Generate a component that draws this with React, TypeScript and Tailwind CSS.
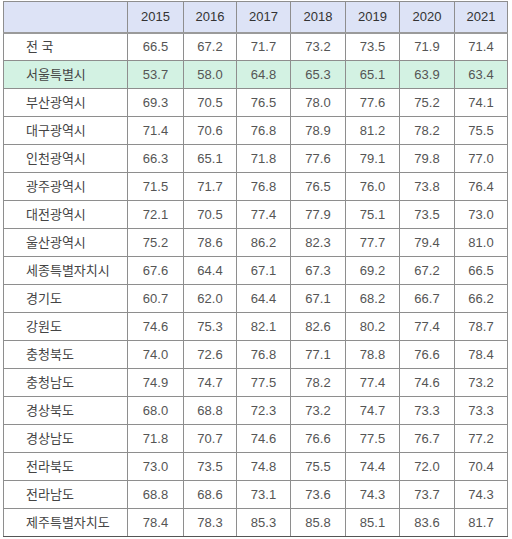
const years = ["2015", "2016", "2017", "2018", "2019", "2020", "2021"];

const rows: { name: string; values: string[]; highlight?: boolean }[] = [
  { name: "전 국", values: ["66.5", "67.2", "71.7", "73.2", "73.5", "71.9", "71.4"] },
  { name: "서울특별시", values: ["53.7", "58.0", "64.8", "65.3", "65.1", "63.9", "63.4"], highlight: true },
  { name: "부산광역시", values: ["69.3", "70.5", "76.5", "78.0", "77.6", "75.2", "74.1"] },
  { name: "대구광역시", values: ["71.4", "70.6", "76.8", "78.9", "81.2", "78.2", "75.5"] },
  { name: "인천광역시", values: ["66.3", "65.1", "71.8", "77.6", "79.1", "79.8", "77.0"] },
  { name: "광주광역시", values: ["71.5", "71.7", "76.8", "76.5", "76.0", "73.8", "76.4"] },
  { name: "대전광역시", values: ["72.1", "70.5", "77.4", "77.9", "75.1", "73.5", "73.0"] },
  { name: "울산광역시", values: ["75.2", "78.6", "86.2", "82.3", "77.7", "79.4", "81.0"] },
  { name: "세종특별자치시", values: ["67.6", "64.4", "67.1", "67.3", "69.2", "67.2", "66.5"] },
  { name: "경기도", values: ["60.7", "62.0", "64.4", "67.1", "68.2", "66.7", "66.2"] },
  { name: "강원도", values: ["74.6", "75.3", "82.1", "82.6", "80.2", "77.4", "78.7"] },
  { name: "충청북도", values: ["74.0", "72.6", "76.8", "77.1", "78.8", "76.6", "78.4"] },
  { name: "충청남도", values: ["74.9", "74.7", "77.5", "78.2", "77.4", "74.6", "73.2"] },
  { name: "경상북도", values: ["68.0", "68.8", "72.3", "73.2", "74.7", "73.3", "73.3"] },
  { name: "경상남도", values: ["71.8", "70.7", "74.6", "76.6", "77.5", "76.7", "77.2"] },
  { name: "전라북도", values: ["73.0", "73.5", "74.8", "75.5", "74.4", "72.0", "70.4"] },
  { name: "전라남도", values: ["68.8", "68.6", "73.1", "73.6", "74.3", "73.7", "74.3"] },
  { name: "제주특별자치도", values: ["78.4", "78.3", "85.3", "85.8", "85.1", "83.6", "81.7"] },
];

const colWidths = [124, 56, 53, 54, 55, 54, 55, 53];

export default function App() {
  return (
    <div
      className="h-[539px] w-[512px] overflow-hidden bg-white pl-[3px] pt-[1px]"
      style={{ fontFamily: '"Liberation Sans", "Noto Sans CJK KR", sans-serif' }}
    >
      <table className="table-fixed border-collapse text-[13px] text-[#555]">
        <colgroup>
          {colWidths.map((w, i) => (
            <col key={i} style={{ width: w }} />
          ))}
        </colgroup>
        <thead>
          <tr className="h-[31px] bg-[#dde3f6]">
            <th className="border border-b-2 border-[#8e8e8e] border-b-[#9a9a9a]" />
            {years.map((y) => (
              <th
                key={y}
                className="border border-b-2 border-[#8e8e8e] border-b-[#9a9a9a] text-center font-normal text-[#333]"
              >
                {y}
              </th>
            ))}
          </tr>
        </thead>
        <tbody>
          {rows.map((r, i) => (
            <tr
              key={r.name}
              className={
                (r.highlight ? "bg-[#d3f2e3] " : "bg-white ") +
                "h-[28px]"
              }
            >
              <td
                className={
                  "border border-[#8e8e8e] pl-[22px] text-[#444] " +
                  (i === rows.length - 1 ? "border-b-[#555]" : "")
                }
              >
                {r.name}
              </td>
              {r.values.map((v, j) => (
                <td
                  key={j}
                  className={
                    "border border-[#8e8e8e] text-center " +
                    (i === rows.length - 1 ? "border-b-[#555]" : "")
                  }
                >
                  {v}
                </td>
              ))}
            </tr>
          ))}
        </tbody>
      </table>
    </div>
  );
}
